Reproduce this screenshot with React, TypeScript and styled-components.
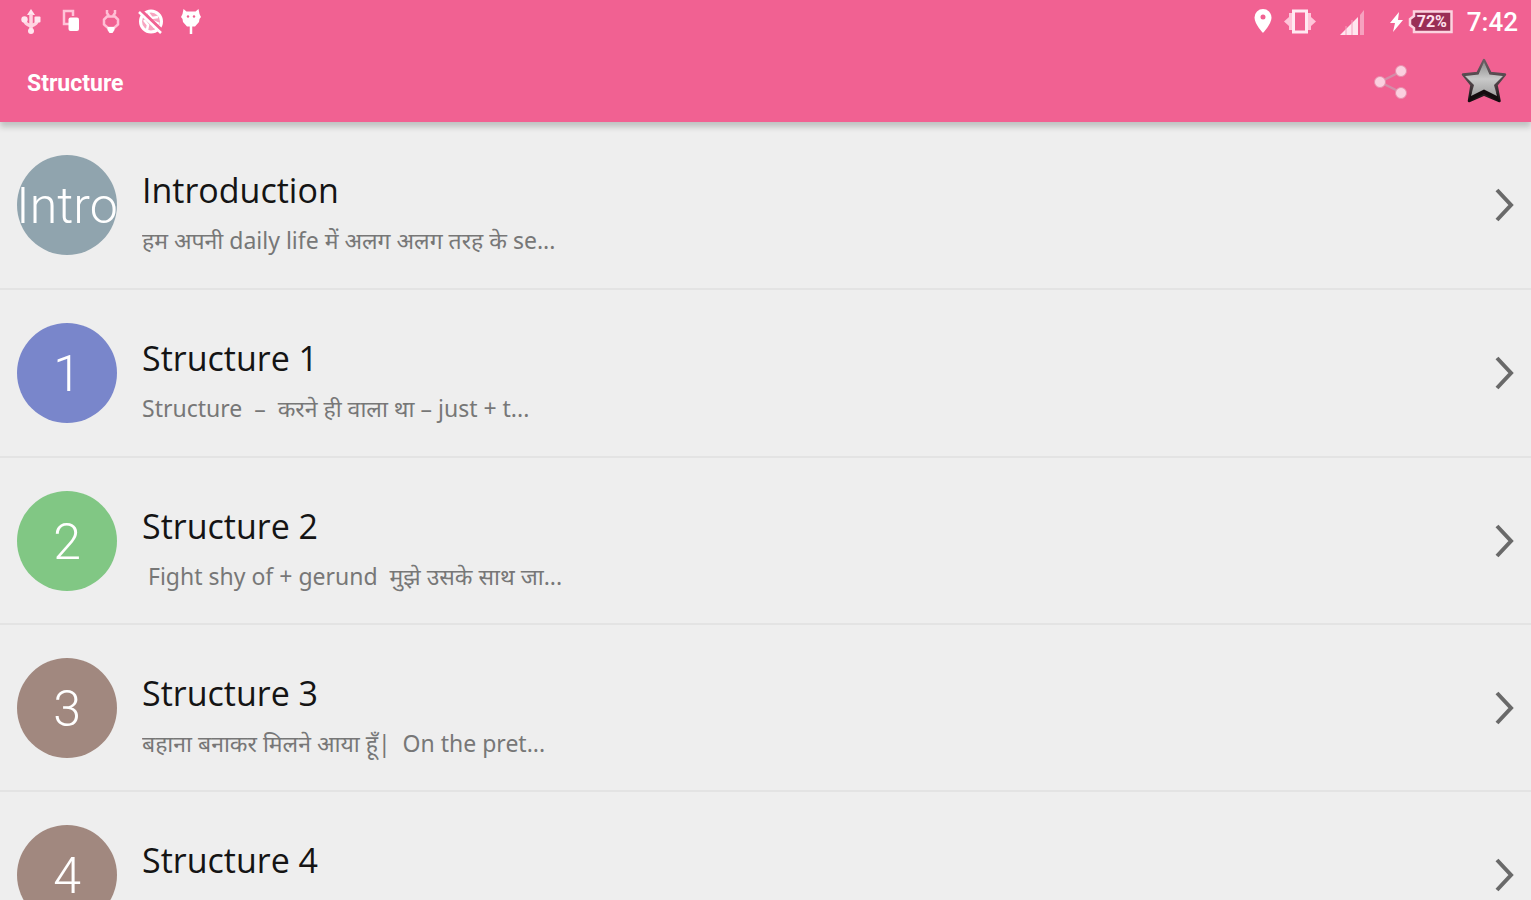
import React from "react";
import styled, { createGlobalStyle } from "styled-components";

const GlobalStyle = createGlobalStyle`
  * { box-sizing: border-box; }
  body {
    margin: 0;
    background: #eeeeee;
    font-family: "Open Sans", "Noto Sans", sans-serif;
  }
  html { scrollbar-width: none; }
`;

const Header = styled.header`
  position: relative;
  z-index: 1;
  background: #f16192;
  color: #ffffff;
  font-family: Roboto, sans-serif;
  box-shadow: 0 5px 6px 0 rgba(0, 20, 15, 0.2);
`;

const StatusBar = styled.div`
  display: flex;
  align-items: center;
  justify-content: space-between;
  height: 44px;
  padding: 0 13px 0 18px;
`;

const Notifications = styled.div`
  display: flex;
  gap: 14px;
`;

const SystemState = styled.div`
  display: flex;
  align-items: center;
`;

const Glyph = styled.svg<{ $gap?: number }>`
  display: block;
  flex: none;
  margin-right: ${(p) => p.$gap ?? 0}px;
`;

const Battery = styled.div`
  display: flex;
  align-items: center;
  justify-content: center;
  position: relative;
  width: 45px;
  height: 26px;
  margin-right: 14px;
`;

const BatteryShape = styled(Glyph)`
  position: absolute;
  inset: 0;
`;

const BatteryLevel = styled.span`
  position: relative;
  padding-left: 3px;
  font-size: 16px;
  font-weight: 700;
  line-height: 16px;
  color: #ffe3ee;
`;

const Clock = styled.time`
  font-size: 26px;
  font-weight: 500;
  line-height: 32px;
`;

const Toolbar = styled.div`
  display: flex;
  align-items: center;
  height: 78px;
  padding: 0 16px 0 27px;
`;

const Title = styled.h1`
  flex: 1;
  margin: 0;
  padding-top: 2px;
  font-size: 23px;
  font-weight: 700;
  line-height: 32px;
`;

const Action = styled.button`
  display: flex;
  align-items: center;
  justify-content: center;
  width: 62px;
  height: 62px;
  padding: 0 0 4px;
  border: 0;
  background: none;
  cursor: pointer;

  & + & {
    margin-left: 31px;
  }
`;

const List = styled.ul`
  margin: 0;
  padding: 0;
  list-style: none;
`;

const Item = styled.li`
  border-bottom: 2px solid #e3e3e3;
`;

const Row = styled.a`
  display: flex;
  align-items: center;
  height: 166px;
  padding: 0 16px 0 17px;
  color: #141414;
  text-decoration: none;

  ${Item}:nth-child(n + 3) & {
    height: 165px;
  }
`;

const Avatar = styled.span<{ $color: string }>`
  display: flex;
  align-items: center;
  justify-content: center;
  flex: none;
  width: 100px;
  height: 100px;
  margin-right: 25px;
  padding-top: 2px;
  border-radius: 50%;
  overflow: hidden;
  background: ${(p) => p.$color};
  color: #ffffff;
  font-family: Roboto, sans-serif;
  font-size: 50px;
  font-weight: 300;
  line-height: 60px;
`;

const Texts = styled.span`
  display: flex;
  flex-direction: column;
  flex: 1;
  min-width: 0;
  padding-top: 20px;
`;

const Name = styled.span`
  font-size: 34px;
  line-height: 50px;
`;

const Summary = styled.span`
  font-family: "Noto Sans", sans-serif;
  font-size: 23px;
  line-height: 50px;
  color: #777777;
  white-space: pre;
  overflow: hidden;
`;

const entries = [
  { badge: "Intro", color: "#90a4ae", name: "Introduction", text: "हम अपनी daily life में अलग अलग तरह के se..." },
  { badge: "1", color: "#7986cb", name: "Structure 1", text: "Structure  –  करने ही वाला था – just + t..." },
  { badge: "2", color: "#81c784", name: "Structure 2", text: " Fight shy of + gerund  मुझे उसके साथ जा..." },
  { badge: "3", color: "#a1887f", name: "Structure 3", text: "बहाना बनाकर मिलने आया हूँ|  On the pret..." },
  { badge: "4", color: "#a1887f", name: "Structure 4", text: "" },
];

const NotificationIcons = () => (
  <Notifications>
    <Glyph width="26" height="28" viewBox="0 0 26 28" fill="#ffe6ef">
      <path d="M13 1l4 6H9z" />
      <path d="M13 6v15M7 11v2q0 3 6 5M19 11v2q0 3-6 5" fill="none" stroke="#ffd3e1" strokeWidth="3.500" />
      <circle cx="6.500" cy="11.500" r="3.200" />
      <rect x="16.500" y="8.500" width="6" height="6" rx="1" />
      <circle cx="13" cy="23" r="3" />
    </Glyph>
    <Glyph width="26" height="28" viewBox="0 0 26 28">
      <path d="M11 16H6V3h9v5" fill="none" stroke="#ffc4d8" strokeWidth="2.500" />
      <rect x="10.500" y="9.500" width="10.500" height="13.500" rx="2" fill="#fff" />
    </Glyph>
    <Glyph width="26" height="28" viewBox="0 0 26 28" fill="none" stroke="#ffbfd5" strokeWidth="2.500">
      <path d="M9 2v3l2 3M17 2v3l-2 3" />
      <path d="M9 8.500h8l3 3v5L16 20h-6l-4-3.500v-5z" />
      <path d="M9.500 19h7v3l-2 3h-3l-2-3z" fill="#fff" stroke="none" />
    </Glyph>
    <Glyph width="26" height="28" viewBox="0 0 26 28">
      <circle cx="13" cy="13.500" r="10.500" fill="#f7a5c1" stroke="#fff" strokeWidth="3" />
      <path d="M10 5l4 5 6-1M14 13l7 3M6 12l4 5-1 5M15 19l4-2" fill="none" stroke="#fff" strokeWidth="2.500" />
      <path d="M2.500 2.500l22 21" stroke="#f16192" strokeWidth="4" />
      <path d="M1 4l22 21" stroke="#fff" strokeWidth="2.500" />
    </Glyph>
    <Glyph width="26" height="28" viewBox="0 0 26 28">
      <path d="M5.500 1l3 2.500h9l3-2.500 1 5 1.500 3-1.500 2-.5 3-4 4.500h-8l-4-4.500-.5-3L3 9l1.500-3z" fill="#fff" />
      <path d="M13 18v8" stroke="#fff" strokeWidth="2.500" />
      <circle cx="10" cy="8.500" r="1.200" fill="#f16192" />
      <circle cx="16" cy="8.500" r="1.200" fill="#f16192" />
    </Glyph>
  </Notifications>
);

const StateIcons = () => (
  <>
    <Glyph $gap={12} width="18" height="26" viewBox="0 0 18 26">
      <path fillRule="evenodd" fill="#fff" d="M9 0a8.500 8.500 0 0 0-8.500 8.500C.5 15 9 24 9 24s8.500-9 8.500-15.500A8.500 8.500 0 0 0 9 0zm0 5.500a2.500 2.500 0 1 1 0 5 2.500 2.500 0 0 1 0-5z" />
    </Glyph>
    <Glyph $gap={24} width="32" height="26" viewBox="0 0 32 26">
      <path d="M9 4v17H5v-4L0 12.500 5 8V4zM23 4v17h4v-4l5-4.500L27 8V4z" fill="#ffc4d9" />
      <rect x="9.500" y="2" width="13" height="21" fill="#f16192" stroke="#ffe9f1" strokeWidth="3" />
    </Glyph>
    <Glyph $gap={25} width="25" height="26" viewBox="0 0 25 26">
      <path d="M0 26l18-18v18z" fill="#ffe6ef" />
      <path d="M6 17v9M12 11v15" stroke="#f6a0bd" strokeWidth="1" />
      <path d="M20 6l4-5v25h-4z" fill="#f6a1bf" />
    </Glyph>
    <Glyph $gap={5} width="13" height="20" viewBox="0 0 13 20">
      <path d="M9 0L0 11h5L3 20l10-12H8z" fill="#fff" />
    </Glyph>
    <Battery>
      <BatteryShape width="45" height="26" viewBox="0 0 45 26">
        <path d="M6 2.500h37.500v20.500H6V19L2 16v-6l4-3z" fill="#9a2e56" stroke="#fbd3e0" strokeWidth="2.500" />
      </BatteryShape>
      <BatteryLevel>72%</BatteryLevel>
    </Battery>
  </>
);

const ShareIcon = () => (
  <Glyph width="34" height="38" viewBox="0 0 34 38">
    <path d="M28 9L6 20l22 11" fill="none" stroke="#d48da8" strokeWidth="2.500" />
    <g fill="#fbcfdf" stroke="#e78eab" strokeWidth="1">
      <circle cx="27" cy="9" r="5.500" />
      <circle cx="6" cy="20" r="5.500" />
      <circle cx="27" cy="31" r="5.500" />
    </g>
  </Glyph>
);

const StarIcon = () => (
  <Glyph width="46" height="48" viewBox="0 0 46 48">
    <defs>
      <linearGradient id="star-fill" x1="0" y1="0" x2="0" y2="1">
        <stop offset="0" stopColor="#8c8c8c" />
        <stop offset="0.500" stopColor="#c9c9c9" />
        <stop offset="1" stopColor="#a0a0a0" />
      </linearGradient>
      <linearGradient id="star-edge" x1="0" y1="0" x2="0" y2="1">
        <stop offset="0" stopColor="#6b5c62" />
        <stop offset="0.600" stopColor="#4b4044" />
        <stop offset="1" stopColor="#130c0e" />
      </linearGradient>
    </defs>
    <path d="M23 3l6.500 13L44 17.500 35.500 28 38.500 44 23 37.500 8 44l2.500-16L2 17.500 16.500 16z" fill="#4b4044" stroke="url(#star-edge)" strokeWidth="2.500" strokeLinejoin="round" />
    <path d="M10 36l13-5 13 5 2 8-15-7-15 7z" fill="#130c0e" />
    <path d="M23 5l5.500 12.500L42 19l-9 9 3 11-13-6.500L10 39l3-11-9-9 13.500-1.500z" fill="url(#star-fill)" />
  </Glyph>
);

const Chevron = () => (
  <Glyph width="20" height="36" viewBox="0 0 20 36" fill="none" stroke="#696969" strokeWidth="4">
    <path d="M2 3l14 15L2 33" />
  </Glyph>
);

export default function App() {
  return (
    <>
      <GlobalStyle />
      <Header>
        <StatusBar>
          <NotificationIcons />
          <SystemState>
            <StateIcons />
            <Clock>7:42</Clock>
          </SystemState>
        </StatusBar>
        <Toolbar>
          <Title>Structure</Title>
          <Action type="button" aria-label="Share">
            <ShareIcon />
          </Action>
          <Action type="button" aria-label="Favourite">
            <StarIcon />
          </Action>
        </Toolbar>
      </Header>
      <main>
        <List>
          {entries.map((e) => (
            <Item key={e.name}>
              <Row href="#">
                <Avatar $color={e.color}>{e.badge}</Avatar>
                <Texts>
                  <Name>{e.name}</Name>
                  <Summary>{e.text || " "}</Summary>
                </Texts>
                <Chevron />
              </Row>
            </Item>
          ))}
        </List>
      </main>
    </>
  );
}
